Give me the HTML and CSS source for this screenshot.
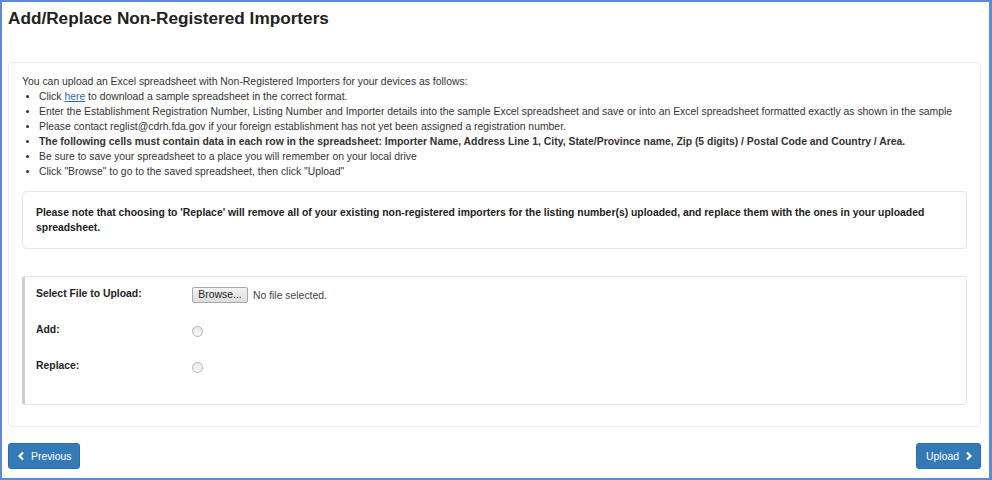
FILE: index.html
```html
<!DOCTYPE html>
<html lang="en">

<head>
    <meta charset="UTF-8" />
    <title>Add/Replace Non-Registered Importers</title>
    <link rel="stylesheet" href="styles.css">
</head>

<body>
    <div class="frame">
        <h1>Add/Replace Non-Registered Importers</h1>

        <div class="panel">
            <p class="intro">You can upload an Excel spreadsheet with Non-Registered Importers for your devices as follows:</p>
            <ul class="steps">
                <li>Click <a href="#">here</a> to download a sample spreadsheet in the correct format.</li>
                <li>Enter the Establishment Registration Number, Listing Number and Importer details into the sample Excel spreadsheet and save or into an Excel spreadsheet formatted exactly as shown in the sample</li>
                <li>Please contact reglist@cdrh.fda.gov if your foreign establishment has not yet been assigned a registration number.</li>
                <li><b>The following cells must contain data in each row in the spreadsheet: Importer Name, Address Line 1, City, State/Province name, Zip (5 digits) / Postal Code and Country / Area.</b></li>
                <li>Be sure to save your spreadsheet to a place you will remember on your local drive</li>
                <li>Click "Browse" to go to the saved spreadsheet, then click "Upload"</li>
            </ul>

            <div class="note">
                Please note that choosing to 'Replace' will remove all of your existing non-registered importers for the listing number(s) uploaded, and replace them with the ones in your uploaded spreadsheet.
            </div>

            <div class="upload-form">
                <div class="form-row">
                    <label>Select File to Upload:</label>
                    <div class="file-field">
                        <span class="browse">Browse...</span>
                        <span class="file-name">No file selected.</span>
                    </div>
                </div>
                <div class="form-row">
                    <label>Add:</label>
                    <span class="radio"></span>
                </div>
                <div class="form-row">
                    <label>Replace:</label>
                    <span class="radio"></span>
                </div>
            </div>
        </div>

        <div class="actions">
            <a href="#" class="btn">
                <svg width="6" height="10" viewBox="0 0 6 10"><path d="M5 1.5 L1.5 5 L5 8.5" fill="none" stroke="#fff" stroke-width="2.2" /></svg>
                Previous
            </a>
            <a href="#" class="btn">
                Upload
                <svg width="6" height="10" viewBox="0 0 6 10"><path d="M1 1.5 L4.5 5 L1 8.5" fill="none" stroke="#fff" stroke-width="2.2" /></svg>
            </a>
        </div>
    </div>
</body>

</html>
```

FILE: styles.css
```css
* {
    margin: 0;
    padding: 0;
    box-sizing: border-box;
}

body {
    background-color: #ffffff;
    font-family: 'Liberation Sans', Arial, sans-serif;
    color: #333;
    font-size: 10.4px;
}

.frame {
    width: 992px;
    height: 480px;
    border: 2px solid #5b8bd6;
    border-right-width: 3px;
    padding: 5px 8px 0 6px;
}

h1 {
    font-size: 17.2px;
    font-weight: bold;
    color: #222;
    height: 55px;
    padding-top: 1px;
}

.panel {
    border: 1px solid #ececec;
    border-radius: 4px;
    padding: 11px 13px 21px 13px;
}

.intro {
    line-height: 15px;
}

.steps {
    list-style: disc;
    padding-left: 17px;
    line-height: 15px;
    margin-bottom: 12px;
}

.steps a {
    color: #2a6fb5;
    text-decoration: underline;
}

.note {
    border: 1px solid #e6e6e6;
    border-radius: 4px;
    padding: 13px 13px;
    font-weight: bold;
    color: #222;
    line-height: 15px;
    margin-bottom: 27px;
}

.upload-form {
    border: 1px solid #e6e6e6;
    border-left: 3px solid #cfcfcf;
    border-radius: 3px;
    padding: 0 12px 19px 11px;
}

.form-row {
    display: flex;
    align-items: center;
    height: 36px;
}

.form-row label {
    width: 156px;
    font-weight: bold;
    color: #222;
    margin-top: -3px;
}

.file-field {
    display: flex;
    align-items: center;
    gap: 5px;
}

.browse {
    display: inline-block;
    width: 56px;
    height: 16px;
    line-height: 14px;
    text-align: center;
    border: 1px solid #a9a9a9;
    border-radius: 2px;
    background: linear-gradient(#f4f4f4, #dcdcdc);
    color: #222;
}

.file-name {
    color: #444;
}

.radio {
    width: 11px;
    height: 11px;
    border-radius: 50%;
    border: 1px solid #b5b5b5;
    background: linear-gradient(#e6e6e6, #fbfbfb);
}

.actions {
    display: flex;
    justify-content: space-between;
    margin-top: 16px;
}

.btn {
    display: inline-flex;
    align-items: center;
    gap: 7px;
    height: 26px;
    padding: 0 8px 0 9px;
    background-color: #337ab7;
    border: 1px solid #2e6da4;
    border-radius: 3px;
    color: #ffffff;
    text-decoration: none;
    font-size: 10.4px;
}
```
